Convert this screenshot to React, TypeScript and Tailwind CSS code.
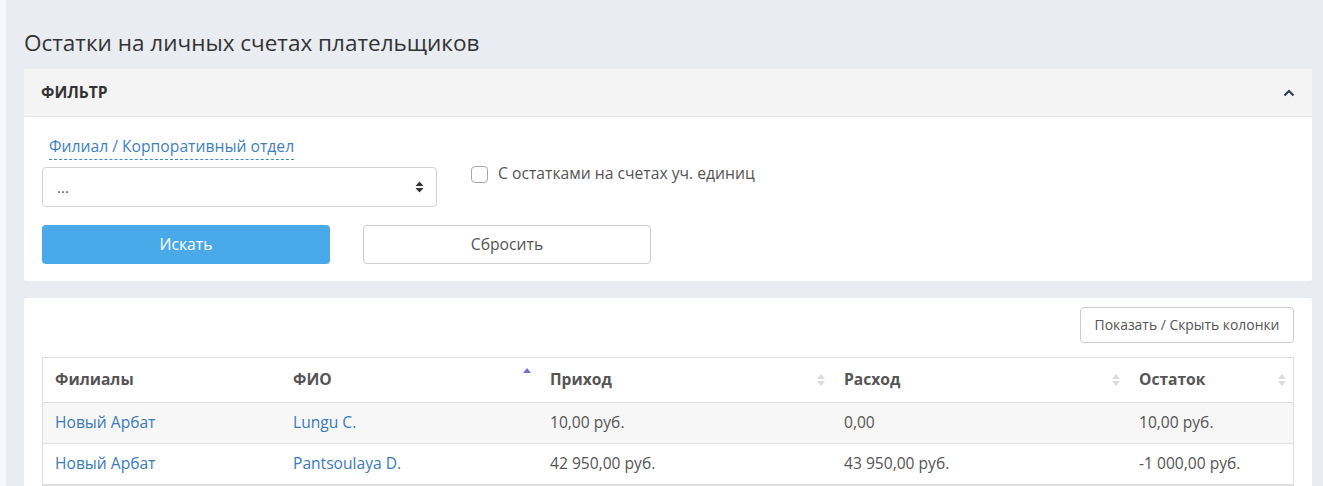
import React from "react";

function SortBoth({ active }: { active?: boolean }) {
  if (active) {
    return (
      <svg width="8" height="12" viewBox="0 0 8 12" className="shrink-0">
        <path d="M0 5 L4 0 L8 5 Z" fill="#6f73d6" />
      </svg>
    );
  }
  return (
    <svg width="8" height="14" viewBox="0 0 8 14" className="shrink-0">
      <path d="M0 6 L4 1 L8 6 Z" fill="#dcdcdc" />
      <path d="M0 8 L4 13 L8 8 Z" fill="#dcdcdc" />
    </svg>
  );
}

const rows = [
  { f: "Новый Арбат", n: "Lungu C.", p: "10,00 руб.", r: "0,00", o: "10,00 руб." },
  { f: "Новый Арбат", n: "Pantsoulaya D.", p: "42 950,00 руб.", r: "43 950,00 руб.", o: "-1 000,00 руб." },
];

const cols = [
  { t: "Филиалы", w: "w-[238px]", s: null as null | "both" | "asc" },
  { t: "ФИО", w: "w-[257px]", s: "asc" as const },
  { t: "Приход", w: "w-[294px]", s: "both" as const },
  { t: "Расход", w: "w-[295px]", s: "both" as const },
  { t: "Остаток", w: "flex-1", s: "both" as const },
];

export default function App() {
  return (
    <div
      className="flex h-[486px] w-[1323px] overflow-hidden bg-[#e9ecf1] text-[#555]"
      style={{ fontFamily: '"Open Sans", "Noto Sans", sans-serif' }}
    >
      <div className="w-[6px] shrink-0 bg-[#f6f8fb]" />
      <div className="flex w-[1306px] shrink-0 flex-col pl-[18px] pt-[26px]">
        <h1 className="h-[33px] text-[22.5px] leading-[33px] text-[#333]">
          Остатки на личных счетах плательщиков
        </h1>
        <div className="mt-[10px] rounded-[3px] bg-white">
          <div className="flex h-[48px] items-center justify-between rounded-t-[3px] border-b border-[#e3e3e3] bg-[#f4f4f4] px-[17px]">
            <span className="text-[15.6px] font-bold text-[#333]">ФИЛЬТР</span>
            <svg width="12" height="8" viewBox="0 0 12 8">
              <path d="M1.5 6.5 L6 2 L10.5 6.5" fill="none" stroke="#2b3a4a" strokeWidth="2" />
            </svg>
          </div>
          <div className="px-[18px] pt-[17px] pb-[17px]">
            <div className="flex">
              <div className="w-[395px]">
                <div className="pl-[7px]">
                  <span className="border-b border-dashed border-[#3f87c6] pb-[2px] text-[15.7px] leading-[21px] text-[#3f7fbf]">
                    Филиал / Корпоративный отдел
                  </span>
                </div>
                <div className="mt-[9px] flex h-[40px] items-center justify-between rounded-[4px] border border-[#d2d2d2] pl-[14px] pr-[12px]">
                  <span className="text-[15px] text-[#555]">...</span>
                  <svg width="9" height="14" viewBox="0 0 9 14">
                    <path d="M0.5 6 L4.5 1.5 L8.5 6 Z" fill="#333" />
                    <path d="M0.5 8 L4.5 12.5 L8.5 8 Z" fill="#333" />
                  </svg>
                </div>
              </div>
              <div className="ml-[34px] mt-[30px] flex h-[20px] items-center">
                <span className="h-[17px] w-[17px] rounded-[4px] border border-[#a9a9a9] bg-white" />
                <span className="ml-[10px] text-[15.7px] text-[#555]">С остатками на счетах уч. единиц</span>
              </div>
            </div>
            <div className="mt-[18px] flex gap-[33px]">
              <button className="flex h-[39px] w-[288px] items-center justify-center rounded-[4px] bg-[#4aa9e9] text-[15.7px] text-white">
                Искать
              </button>
              <button className="flex h-[39px] w-[288px] items-center justify-center rounded-[4px] border border-[#cccccc] bg-white text-[15.7px] text-[#555]">
                Сбросить
              </button>
            </div>
          </div>
        </div>
        <div className="mt-[17px] flex-1 rounded-t-[3px] bg-white px-[18px] pt-[9px]">
          <div className="flex justify-end">
            <button className="flex h-[36px] w-[214px] items-center justify-center rounded-[4px] border border-[#cccccc] bg-white text-[13.9px] text-[#555]">
              Показать / Скрыть колонки
            </button>
          </div>
          <div className="mt-[14px] border border-[#dedede]">
            <div className="flex h-[45px] border-b border-[#dedede]">
              {cols.map((c) => (
                <div key={c.t} className={`${c.w} flex items-center justify-between pl-[12px] pr-[7px]`}>
                  <span className="text-[15.6px] font-bold text-[#555]">{c.t}</span>
                  {c.s === "asc" && (
                    <span className="mb-[12px]">
                      <SortBoth active />
                    </span>
                  )}
                  {c.s === "both" && <SortBoth />}
                </div>
              ))}
            </div>
            {rows.map((r, i) => (
              <div
                key={i}
                className={`flex h-[41px] items-center border-b border-[#dedede] text-[15.6px] ${i === 0 ? "bg-[#f7f7f7]" : "bg-white"}`}
              >
                <div className="w-[238px] pl-[12px] text-[#3a7bb8]">{r.f}</div>
                <div className="w-[257px] pl-[12px] text-[#3a7bb8]">{r.n}</div>
                <div className="w-[294px] pl-[12px]">{r.p}</div>
                <div className="w-[295px] pl-[12px]">{r.r}</div>
                <div className="flex-1 pl-[12px]">{r.o}</div>
              </div>
            ))}
          </div>
        </div>
      </div>
    </div>
  );
}
